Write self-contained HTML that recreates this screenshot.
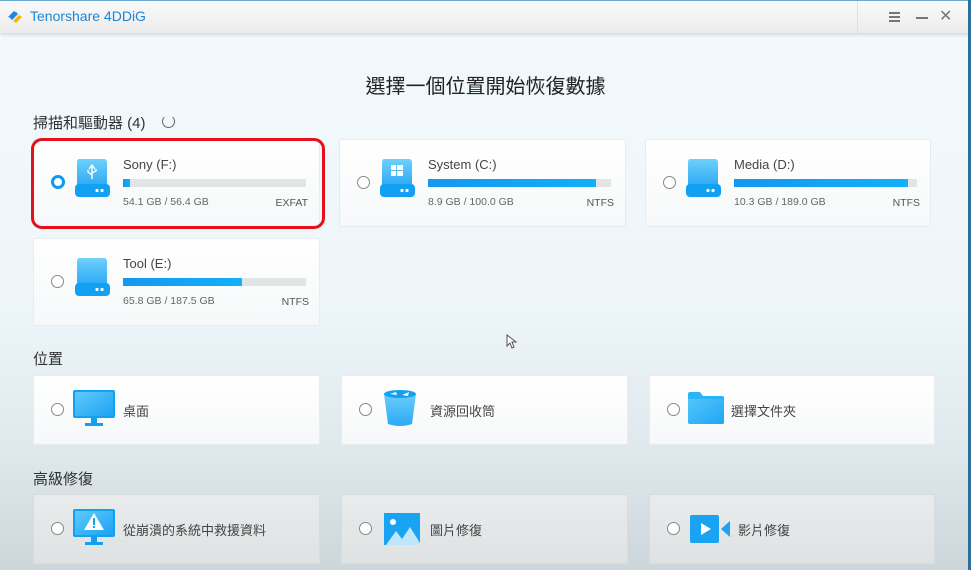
<!DOCTYPE html>
<html><head><meta charset="utf-8"><style>
*{margin:0;padding:0;box-sizing:border-box}
body{width:971px;height:570px;overflow:hidden;font-family:"Liberation Sans","Noto Sans CJK TC",sans-serif;color:#333;position:relative;background:linear-gradient(#f2f9fd 0px,#eef6fa 300px,#dfe8ec 450px,#cdd6da 570px)}
.tb{position:absolute;left:0;top:0;width:971px;height:33px;background:linear-gradient(#fafafa,#ececec);box-shadow:0 2px 3px rgba(0,0,0,.12);border-top:1px solid #6aa9d0}
.abs{position:absolute}
.card{position:absolute;background:linear-gradient(#fff,#f6f8f9);border:1px solid #e6ecef;border-radius:2px}
.card.g{background:linear-gradient(#e9ebec,#dfe2e3);border-color:#d8dcde}
.radio{position:absolute;width:13px;height:13px;border:1.5px solid #888;border-radius:50%;background:#fff}
.name{position:absolute;font-size:13px;color:#444}
.bar{position:absolute;height:8px;background:#e2e4e6;width:183px}
.bar i{display:block;height:8px;background:linear-gradient(90deg,#1597f0,#12b0f7)}
.sz{position:absolute;font-size:10.5px;color:#666}
.fs{position:absolute;font-size:10.5px;color:#555;text-align:right}
.lbl{position:absolute;font-size:13px;color:#444}
.h{position:absolute;font-size:15px;color:#333}
</style></head><body>
<div class="tb">
<svg class="abs" style="left:6px;top:8px" width="18" height="16" viewBox="0 0 18 16"><path d="M2 8 L8 2 L11 4 L6 9 Z" fill="#1e88e5"/><path d="M7 12 L13 6 L16 8 L10 14 Z" fill="#f5b800"/><path d="M5 10 L11 4" stroke="#1e88e5" stroke-width="3"/></svg>
<div class="abs" style="left:30px;top:7px;font-size:14px;color:#1b86d6">Tenorshare 4DDiG</div>
<div class="abs" style="left:857px;top:0;width:1px;height:33px;background:#e2e2e2"></div>
<div class="abs" style="left:889px;top:11px;width:11px;height:1.5px;background:#777;box-shadow:0 4px 0 #777,0 8px 0 #777"></div>
<div class="abs" style="left:916px;top:16px;width:12px;height:1.5px;background:#777"></div>
<div class="abs" style="left:939px;top:5px;font-size:16px;color:#777">✕</div>
</div>
<div class="abs" style="left:968px;top:0;width:3px;height:570px;background:#2f6f9c"></div>

<div class="abs" style="left:0;width:971px;top:70px;text-align:center;font-size:20px;color:#222">選擇一個位置開始恢復數據</div>
<div class="h" style="left:33px;top:112px">掃描和驅動器 (4)</div>
<div class="abs" style="left:162px;top:115px;width:13px;height:13px;border:1.5px solid #666;border-radius:50%;border-top-color:transparent"></div>

<div class="card" style="left:33px;top:139px;width:287px;height:88px"></div>
<div class="card" style="left:339px;top:139px;width:287px;height:88px"></div>
<div class="card" style="left:645px;top:139px;width:286px;height:88px"></div>
<div class="card" style="left:33px;top:238px;width:287px;height:88px"></div>
<div class="abs" style="left:31px;top:138px;width:294px;height:91px;border:3px solid #e5101a;border-radius:11px"></div>

<div class="abs" style="left:51px;top:175px;width:14px;height:14px;border:3.5px solid #109af2;border-radius:50%;background:#fff"></div>
<div class="radio" style="left:357px;top:176px"></div>
<div class="radio" style="left:663px;top:176px"></div>
<div class="radio" style="left:51px;top:275px"></div>

<svg class="abs" style="left:73px;top:157px" width="38" height="42" viewBox="0 0 38 42"><defs><linearGradient id="dg" x1="0" y1="0" x2="0" y2="1"><stop offset="0" stop-color="#6fd0fc"/><stop offset="1" stop-color="#2ca9f5"/></linearGradient></defs><path d="M6 2 H31 Q34 2 34 6 V29 H4 V6 Q4 2 6 2Z" fill="url(#dg)"/><rect x="2" y="27" width="35" height="13" rx="4" fill="#12a0f2"/><circle cx="24" cy="33.5" r="1.6" fill="#fff"/><circle cx="29" cy="33.5" r="1.6" fill="#fff"/><path d="M19 9 V22 M16 12 L19 8 L22 12 M19 18 L15 15 V13 M19 16 L23 14 V12" stroke="#fff" stroke-width="1.4" fill="none"/></svg>
<svg class="abs" style="left:378px;top:157px" width="38" height="42" viewBox="0 0 38 42"><path d="M6 2 H31 Q34 2 34 6 V29 H4 V6 Q4 2 6 2Z" fill="url(#dg)"/><rect x="2" y="27" width="35" height="13" rx="4" fill="#12a0f2"/><circle cx="24" cy="33.5" r="1.6" fill="#fff"/><circle cx="29" cy="33.5" r="1.6" fill="#fff"/><rect x="13" y="8" width="5" height="5" fill="#fff"/><rect x="19" y="8" width="6" height="5" fill="#fff"/><rect x="13" y="14" width="5" height="5" fill="#fff"/><rect x="19" y="14" width="6" height="5" fill="#fff"/></svg>
<svg class="abs" style="left:684px;top:157px" width="38" height="42" viewBox="0 0 38 42"><path d="M6 2 H31 Q34 2 34 6 V29 H4 V6 Q4 2 6 2Z" fill="url(#dg)"/><rect x="2" y="27" width="35" height="13" rx="4" fill="#12a0f2"/><circle cx="24" cy="33.5" r="1.6" fill="#fff"/><circle cx="29" cy="33.5" r="1.6" fill="#fff"/></svg>
<svg class="abs" style="left:73px;top:256px" width="38" height="42" viewBox="0 0 38 42"><path d="M6 2 H31 Q34 2 34 6 V29 H4 V6 Q4 2 6 2Z" fill="url(#dg)"/><rect x="2" y="27" width="35" height="13" rx="4" fill="#12a0f2"/><circle cx="24" cy="33.5" r="1.6" fill="#fff"/><circle cx="29" cy="33.5" r="1.6" fill="#fff"/></svg>

<div class="name" style="left:123px;top:157px">Sony (F:)</div>
<div class="bar" style="left:123px;top:179px"><i style="width:7px"></i></div>
<div class="sz" style="left:123px;top:196px">54.1 GB / 56.4 GB</div>
<div class="fs" style="left:250px;width:58px;top:197px">EXFAT</div>

<div class="name" style="left:428px;top:157px">System (C:)</div>
<div class="bar" style="left:428px;top:179px"><i style="width:168px"></i></div>
<div class="sz" style="left:428px;top:196px">8.9 GB / 100.0 GB</div>
<div class="fs" style="left:554px;width:60px;top:197px">NTFS</div>

<div class="name" style="left:734px;top:157px">Media (D:)</div>
<div class="bar" style="left:734px;top:179px"><i style="width:174px"></i></div>
<div class="sz" style="left:734px;top:196px">10.3 GB / 189.0 GB</div>
<div class="fs" style="left:860px;width:60px;top:197px">NTFS</div>

<div class="name" style="left:123px;top:256px">Tool (E:)</div>
<div class="bar" style="left:123px;top:278px"><i style="width:119px"></i></div>
<div class="sz" style="left:123px;top:295px">65.8 GB / 187.5 GB</div>
<div class="fs" style="left:249px;width:60px;top:296px">NTFS</div>

<div class="h" style="left:33px;top:348px">位置</div>
<div class="card" style="left:33px;top:375px;width:287px;height:70px"></div>
<div class="card" style="left:341px;top:375px;width:287px;height:70px"></div>
<div class="card" style="left:649px;top:375px;width:286px;height:70px"></div>
<div class="radio" style="left:51px;top:403px"></div>
<div class="radio" style="left:359px;top:403px"></div>
<div class="radio" style="left:667px;top:403px"></div>
<svg class="abs" style="left:73px;top:389px" width="43" height="40" viewBox="0 0 43 40"><defs><linearGradient id="mg" x1="0" y1="0" x2="1" y2="1"><stop offset="0" stop-color="#5fcafc"/><stop offset="1" stop-color="#1ca2f3"/></linearGradient></defs><rect x="0" y="1" width="42" height="28" rx="2" fill="#14a0f0"/><rect x="2" y="3" width="38" height="24" fill="url(#mg)"/><rect x="18" y="29" width="6" height="6" fill="#14a0f0"/><rect x="12" y="34" width="18" height="3" fill="#14a0f0"/></svg>
<svg class="abs" style="left:382px;top:388px" width="36" height="40" viewBox="0 0 36 40"><path d="M2 6 Q18 0 34 6 L30 36 Q18 40 6 36 Z" fill="url(#dg)"/><ellipse cx="18" cy="6" rx="16" ry="4" fill="#12a0f2"/><path d="M8 6 L14 4 L15 7 Z M20 7 L27 4 L26 8 Z" fill="#fff"/></svg>
<svg class="abs" style="left:688px;top:392px" width="36" height="34" viewBox="0 0 36 34"><path d="M0 2 Q0 0 2 0 H12 L15 4 H34 Q36 4 36 6 V30 Q36 32 34 32 H2 Q0 32 0 30Z" fill="#29b4f7"/><path d="M0 7 H34 Q36 7 36 9 V30 Q36 32 34 32 H2 Q0 32 0 30Z" fill="url(#mg)" opacity=".8"/></svg>
<div class="lbl" style="left:123px;top:401px">桌面</div>
<div class="lbl" style="left:430px;top:401px">資源回收筒</div>
<div class="lbl" style="left:731px;top:401px">選擇文件夾</div>

<div class="h" style="left:33px;top:468px">高級修復</div>
<div class="card g" style="left:33px;top:494px;width:287px;height:70px"></div>
<div class="card g" style="left:341px;top:494px;width:287px;height:70px"></div>
<div class="card g" style="left:649px;top:494px;width:286px;height:70px"></div>
<div class="radio" style="left:51px;top:522px"></div>
<div class="radio" style="left:359px;top:522px"></div>
<div class="radio" style="left:667px;top:522px"></div>
<svg class="abs" style="left:73px;top:508px" width="43" height="40" viewBox="0 0 43 40"><rect x="0" y="1" width="42" height="28" rx="2" fill="#14a0f0"/><rect x="2" y="3" width="38" height="24" fill="url(#mg)"/><path d="M21 5 L31 22 H11 Z" fill="#fff"/><rect x="20" y="10" width="2" height="7" fill="#14a0f0"/><rect x="20" y="18" width="2" height="2" fill="#14a0f0"/><rect x="18" y="29" width="6" height="6" fill="#14a0f0"/><rect x="12" y="34" width="18" height="3" fill="#14a0f0"/></svg>
<svg class="abs" style="left:384px;top:513px" width="36" height="32" viewBox="0 0 36 32"><rect width="36" height="32" fill="#1aa3f2"/><circle cx="9" cy="9" r="3" fill="#fff"/><path d="M2 32 L12 18 L18 26 L26 14 L36 30 V32Z" fill="#bfe6fb"/></svg>
<svg class="abs" style="left:690px;top:515px" width="40" height="28" viewBox="0 0 40 28"><rect width="29" height="28" rx="2" fill="#1aa3f2"/><path d="M31 14 L40 6 V22 Z" fill="#1aa3f2"/><path d="M11 8 L21 14 L11 20Z" fill="#fff"/></svg>
<div class="lbl" style="left:123px;top:520px">從崩潰的系統中救援資料</div>
<div class="lbl" style="left:430px;top:520px">圖片修復</div>
<div class="lbl" style="left:738px;top:520px">影片修復</div>

<svg class="abs" style="left:506px;top:334px" width="11" height="15" viewBox="0 0 11 15"><path d="M1 1 V12 L4 9 L6 14 L8 13 L6 8 L10 8Z" fill="#fff" stroke="#555" stroke-width="1"/></svg>
</body></html>
